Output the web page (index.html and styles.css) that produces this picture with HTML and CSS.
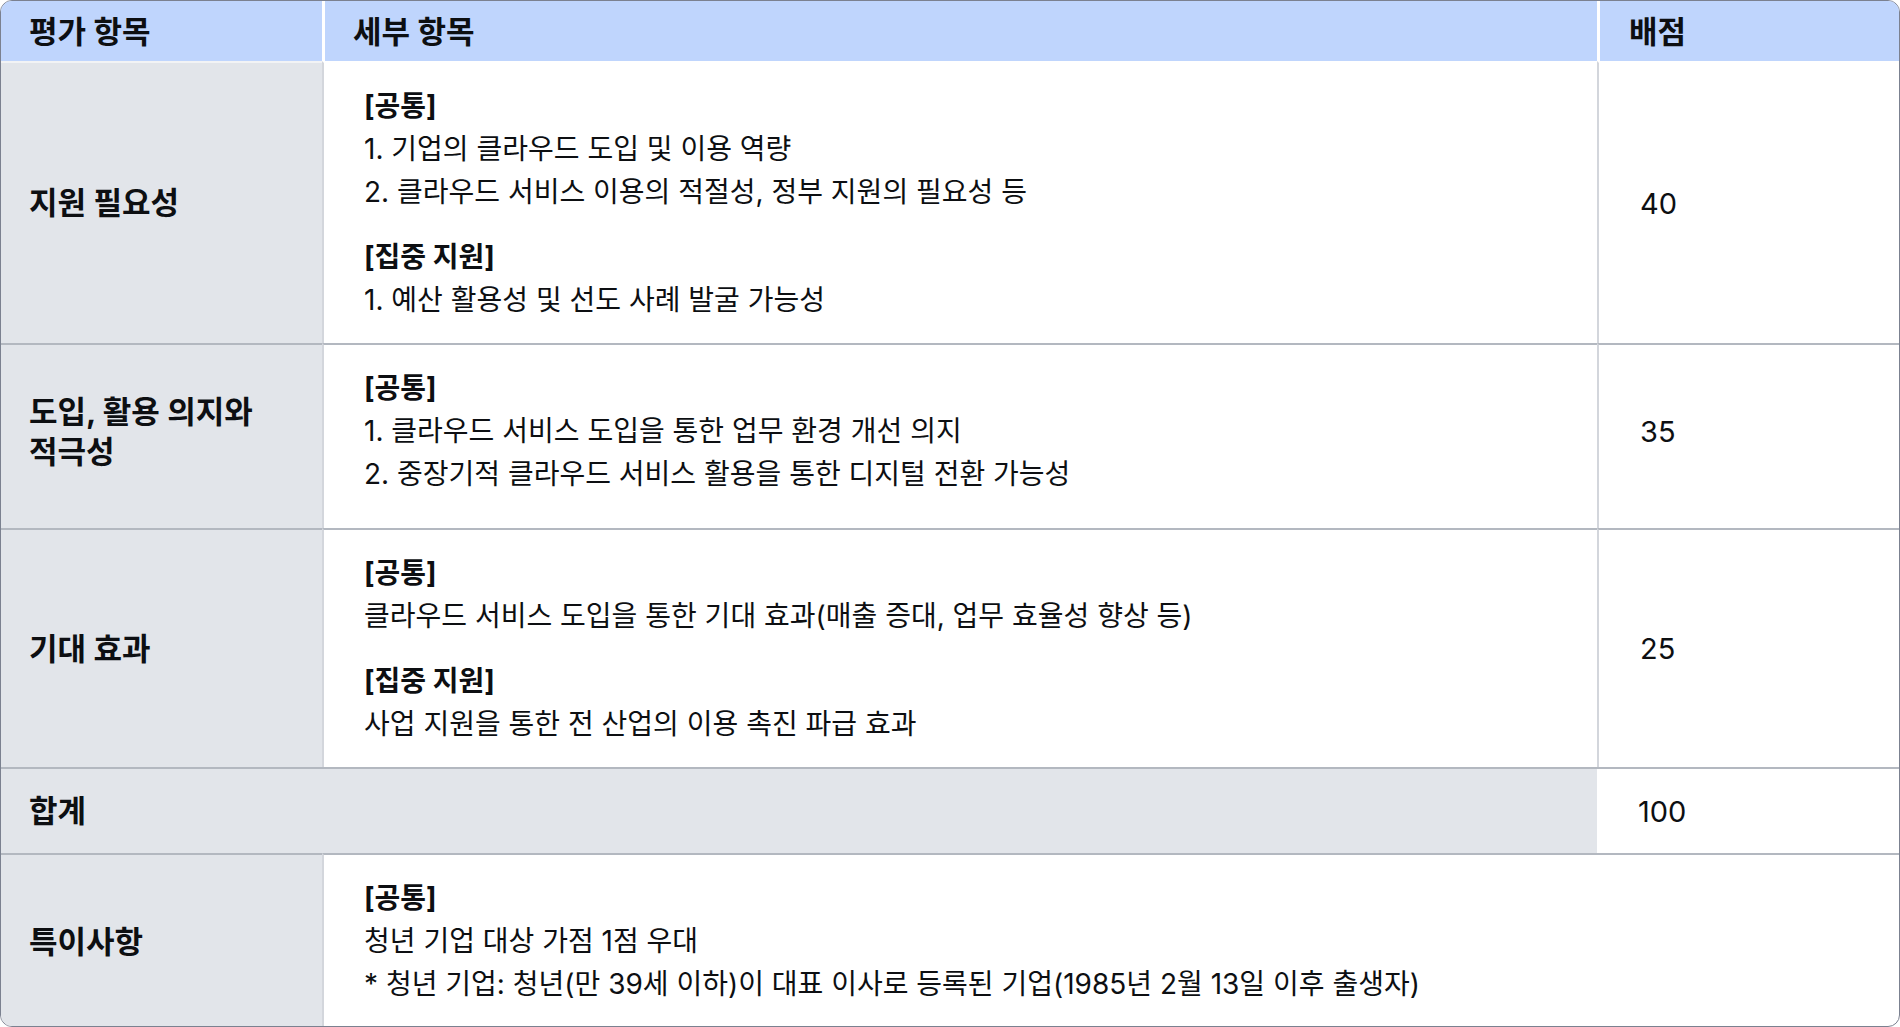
FILE: index.html
```html
<!DOCTYPE html>
<html lang="ko">
<head>
<meta charset="utf-8">
<title>평가 항목</title>
<link rel="stylesheet" href="styles.css">
</head>
<body>
<div class="table">
  <div class="cell head c1">평가 항목</div>
  <div class="cell head c2">세부 항목</div>
  <div class="cell head c3">배점</div>

  <div class="cell label first-row">지원 필요성</div>
  <div class="cell detail first-row">
    <div class="group">
      <p class="tag">[공통]</p>
      <p>1. 기업의 클라우드 도입 및 이용 역량</p>
      <p>2. 클라우드 서비스 이용의 적절성, 정부 지원의 필요성 등</p>
    </div>
    <div class="group">
      <p class="tag">[집중 지원]</p>
      <p>1. 예산 활용성 및 선도 사례 발굴 가능성</p>
    </div>
  </div>
  <div class="cell score first-row">40</div>

  <div class="cell label lift">도입, 활용 의지와<br>적극성</div>
  <div class="cell detail">
    <div class="group">
      <p class="tag">[공통]</p>
      <p>1. 클라우드 서비스 도입을 통한 업무 환경 개선 의지</p>
      <p>2. 중장기적 클라우드 서비스 활용을 통한 디지털 전환 가능성</p>
    </div>
  </div>
  <div class="cell score lift">35</div>

  <div class="cell label">기대 효과</div>
  <div class="cell detail">
    <div class="group">
      <p class="tag">[공통]</p>
      <p>클라우드 서비스 도입을 통한 기대 효과(매출 증대, 업무 효율성 향상 등)</p>
    </div>
    <div class="group">
      <p class="tag">[집중 지원]</p>
      <p>사업 지원을 통한 전 산업의 이용 촉진 파급 효과</p>
    </div>
  </div>
  <div class="cell score">25</div>

  <div class="cell label total">합계</div>
  <div class="cell score total-score">100</div>

  <div class="cell label">특이사항</div>
  <div class="cell detail wide">
    <div class="group">
      <p class="tag">[공통]</p>
      <p>청년 기업 대상 가점 1점 우대</p>
      <p>* 청년 기업: 청년(만 39세 이하)이 대표 이사로 등록된 기업(1985년 2월 13일 이후 출생자)</p>
    </div>
  </div>
</div>
</body>
</html>
```
FILE: styles.css
```css
* { box-sizing: border-box; }
html, body { margin: 0; padding: 0; background: #fff; }
body {
  font-family: Inter, "Noto Sans CJK KR", sans-serif;
  color: #0d0f12;
}
.table {
  width: 1900px;
  height: 1027px;
  display: grid;
  grid-template-columns: 321px 1fr 302px;
  grid-template-rows: 60px 282px 185px 239px 86px 1fr;
  border: 1.5px solid #7b8190;
  border-radius: 12px;
  overflow: hidden;
}
.cell {
  font-size: 28px;
  line-height: 43px;
  border-top: 2px solid #b3b8c0;
}
.head {
  background: #bfd5fd;
  font-weight: 700;
  font-size: 31px;
  display: flex;
  align-items: center;
  border-top: none;
}
.head.c1 { padding-left: 28px; }
.head.c2 { padding-left: 28px; border-left: 3px solid #ffffff; }
.head.c3 { padding-left: 29px; border-left: 3px solid #ffffff; }
.label {
  background: #e2e5ea;
  font-weight: 700;
  font-size: 31px;
  line-height: 40px;
  padding-left: 28px;
  display: flex;
  align-items: center;
}
.detail {
  border-left: 2px solid #d3d6dc;
  padding: 22px 0 22px 40px;
  display: flex;
  flex-direction: column;
  gap: 22px;
}
.detail p { margin: 0; }
.detail .tag { font-weight: 700; }
.score {
  border-left: 2px solid #d3d6dc;
  padding-left: 41px;
  font-size: 29px;
  display: flex;
  align-items: center;
}
.lift { padding-bottom: 10px; }
.total { grid-column: 1 / 3; }
.total-score { border-left: none; }
.wide { grid-column: 2 / 4; }
.label.first-row { border-top: 2px solid #f2f3f5; }
.detail.first-row,
.score.first-row { border-top: 2px solid #ffffff; }
```
